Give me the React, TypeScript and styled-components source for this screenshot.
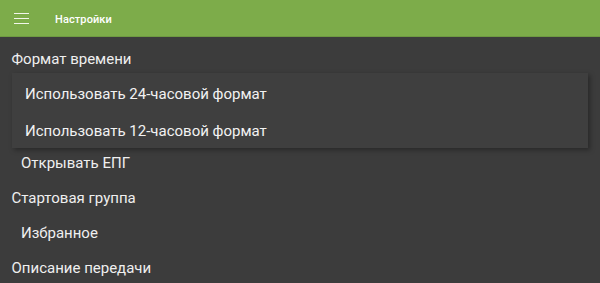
import React from "react";
import styled, { createGlobalStyle } from "styled-components";

const Global = createGlobalStyle`
  html, body { margin: 0; padding: 0; background: #3c3c3c; }
  body { font-family: Roboto, "Noto Sans", sans-serif; -webkit-font-smoothing: antialiased; }
`;

const Page = styled.div`
  position: relative;
  width: 600px;
  height: 283px;
  overflow: hidden;
  background: #3c3c3c;
`;

const Header = styled.header`
  height: 37px;
  box-sizing: border-box;
  display: flex;
  align-items: center;
  background: #7dac4a;
  border-bottom: 1px solid #6f9a42;
  padding-left: 14px;
  gap: 26px;
`;

const Burger = styled.div`
  width: 15px;
  display: flex;
  flex-direction: column;
  gap: 3.5px;
  margin-top: 1px;
  span {
    display: block;
    height: 1.5px;
    background: #f1f6ea;
  }
`;

const Title = styled.div`
  color: #ffffff;
  font-size: 11px;
  font-weight: 500;
  letter-spacing: 0.1px;
  margin-top: 2px;
`;

const List = styled.div`
  padding-top: 5px;
  display: flex;
  flex-direction: column;
`;

const Row = styled.div<{ $value?: boolean }>`
  height: 34.8px;
  line-height: 34.8px;
  padding-left: ${(p) => (p.$value ? "21px" : "11.5px")};
  font-size: 15px;
  color: #efefef;
  white-space: nowrap;
`;

const Popup = styled.div`
  position: absolute;
  top: 73px;
  left: 12px;
  right: 12px;
  background: #3f3f3f;
  box-shadow: 2px 2px 5px rgba(0, 0, 0, 0.35);
  display: flex;
  flex-direction: column;
`;

const Option = styled.div`
  height: 37.5px;
  box-sizing: border-box;
  padding: 4px 0 0 13px;
  display: flex;
  align-items: center;
  font-size: 15px;
  color: #f2f2f2;
  white-space: nowrap;
`;

export default function App() {
  return (
    <Page>
      <Global />
      <Header>
        <Burger>
          <span />
          <span />
          <span />
        </Burger>
        <Title>Настройки</Title>
      </Header>
      <List>
        <Row>Формат времени</Row>
        <Row $value />
        <Row />
        <Row $value>Открывать ЕПГ</Row>
        <Row>Стартовая группа</Row>
        <Row $value>Избранное</Row>
        <Row>Описание передачи</Row>
      </List>
      <Popup>
        <Option>Использовать 24-часовой формат</Option>
        <Option>Использовать 12-часовой формат</Option>
      </Popup>
    </Page>
  );
}
